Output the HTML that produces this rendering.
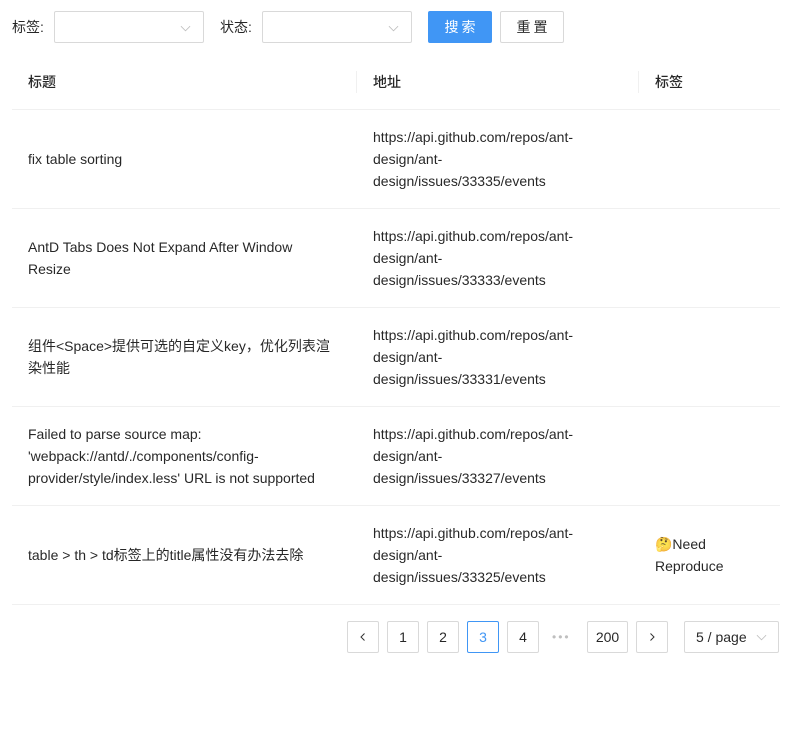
<!DOCTYPE html>
<html><head><meta charset="utf-8"><style>
*{box-sizing:border-box;margin:0;padding:0}
body{width:790px;height:748px;background:#fff;font-family:"Liberation Sans","Noto Sans CJK SC",sans-serif;font-size:14px;color:rgba(0,0,0,.85);position:relative;overflow:hidden}
.a{position:absolute}
.sel{position:absolute;top:11px;height:32px;border:1px solid #d9d9d9;border-radius:2px;background:#fff}
.sel svg{position:absolute;right:12px;top:11px}
.btn{position:absolute;top:11px;height:32px;border-radius:2px;text-align:center;line-height:30px;letter-spacing:3px;padding-left:3px}
.line{position:absolute;left:12px;width:768px;height:1px;background:#f0f0f0}
.cell{position:absolute;line-height:22px}
.pg{position:absolute;top:621px;height:32px;min-width:32px;border:1px solid #d9d9d9;border-radius:2px;text-align:center;line-height:30px;background:#fff}
</style></head><body>
<div class="a" style="left:12px;top:16px;line-height:22px">标签:</div>
<div class="sel" style="left:54px;width:150px"><svg width="11" height="11" viewBox="0 0 12 12"><path d="M1 3.5l5 5 5-5" fill="none" stroke="#bfbfbf" stroke-width="0.9"/></svg></div>
<div class="a" style="left:220px;top:16px;line-height:22px">状态:</div>
<div class="sel" style="left:262px;width:150px"><svg width="11" height="11" viewBox="0 0 12 12"><path d="M1 3.5l5 5 5-5" fill="none" stroke="#bfbfbf" stroke-width="0.9"/></svg></div>
<div class="btn" style="left:428px;width:64px;background:#4096f5;color:#fff;border:1px solid #4096f5">搜索</div>
<div class="btn" style="left:500px;width:64px;border:1px solid #d9d9d9">重置</div>

<div class="cell" style="left:28px;top:71px;font-weight:500">标题</div>
<div class="a" style="left:356px;top:71px;width:1px;height:22px;background:#f0f0f0"></div>
<div class="cell" style="left:373px;top:71px;font-weight:500">地址</div>
<div class="a" style="left:638px;top:71px;width:1px;height:22px;background:#f0f0f0"></div>
<div class="cell" style="left:655px;top:71px;font-weight:500">标签</div>
<div class="line" style="top:109px"></div>

<div class="cell" style="left:28px;top:148px;width:320px">fix table sorting</div>
<div class="cell" style="left:373px;top:126px;width:250px">https://api.github.com/repos/ant-<br>design/ant-<br>design/issues/33335/events</div>
<div class="line" style="top:208px"></div>

<div class="cell" style="left:28px;top:236px;width:320px">AntD Tabs Does Not Expand After Window<br>Resize</div>
<div class="cell" style="left:373px;top:225px;width:250px">https://api.github.com/repos/ant-<br>design/ant-<br>design/issues/33333/events</div>
<div class="line" style="top:307px"></div>

<div class="cell" style="left:28px;top:335px;width:320px">组件&lt;Space&gt;提供可选的自定义key，优化列表渲<br>染性能</div>
<div class="cell" style="left:373px;top:324px;width:250px">https://api.github.com/repos/ant-<br>design/ant-<br>design/issues/33331/events</div>
<div class="line" style="top:406px"></div>

<div class="cell" style="left:28px;top:423px;width:320px">Failed to parse source map:<br>'webpack://antd/./components/config-<br>provider/style/index.less' URL is not supported</div>
<div class="cell" style="left:373px;top:423px;width:250px">https://api.github.com/repos/ant-<br>design/ant-<br>design/issues/33327/events</div>
<div class="line" style="top:505px"></div>

<div class="cell" style="left:28px;top:544px;width:320px">table &gt; th &gt; td标签上的title属性没有办法去除</div>
<div class="cell" style="left:373px;top:522px;width:250px">https://api.github.com/repos/ant-<br>design/ant-<br>design/issues/33325/events</div>
<div class="cell" style="left:655px;top:533px;width:120px">🤔Need<br>Reproduce</div>
<div class="line" style="top:604px"></div>

<div class="pg" style="left:347px"><svg width="10" height="10" viewBox="0 0 10 10" style="margin-top:10px"><path d="M6.5 1.5L3 5l3.5 3.5" fill="none" stroke="#333" stroke-width="1"/></svg></div>
<div class="pg" style="left:387px">1</div>
<div class="pg" style="left:427px">2</div>
<div class="pg" style="left:467px;border-color:#4096f5;color:#4096f5">3</div>
<div class="pg" style="left:507px">4</div>
<div class="a" style="left:552px;top:621px;line-height:32px;color:#bfbfbf;letter-spacing:2px;font-size:12px">•••</div>
<div class="pg" style="left:587px;width:41px">200</div>
<div class="pg" style="left:636px"><svg width="10" height="10" viewBox="0 0 10 10" style="margin-top:10px"><path d="M3.5 1.5L7 5 3.5 8.5" fill="none" stroke="#333" stroke-width="1"/></svg></div>
<div class="pg" style="left:684px;width:95px;text-align:left;padding-left:11px">5 / page<svg width="11" height="11" viewBox="0 0 12 12" style="position:absolute;right:11px;top:10px"><path d="M1 3.5l5 5 5-5" fill="none" stroke="#bfbfbf" stroke-width="0.9"/></svg></div>
</body></html>
